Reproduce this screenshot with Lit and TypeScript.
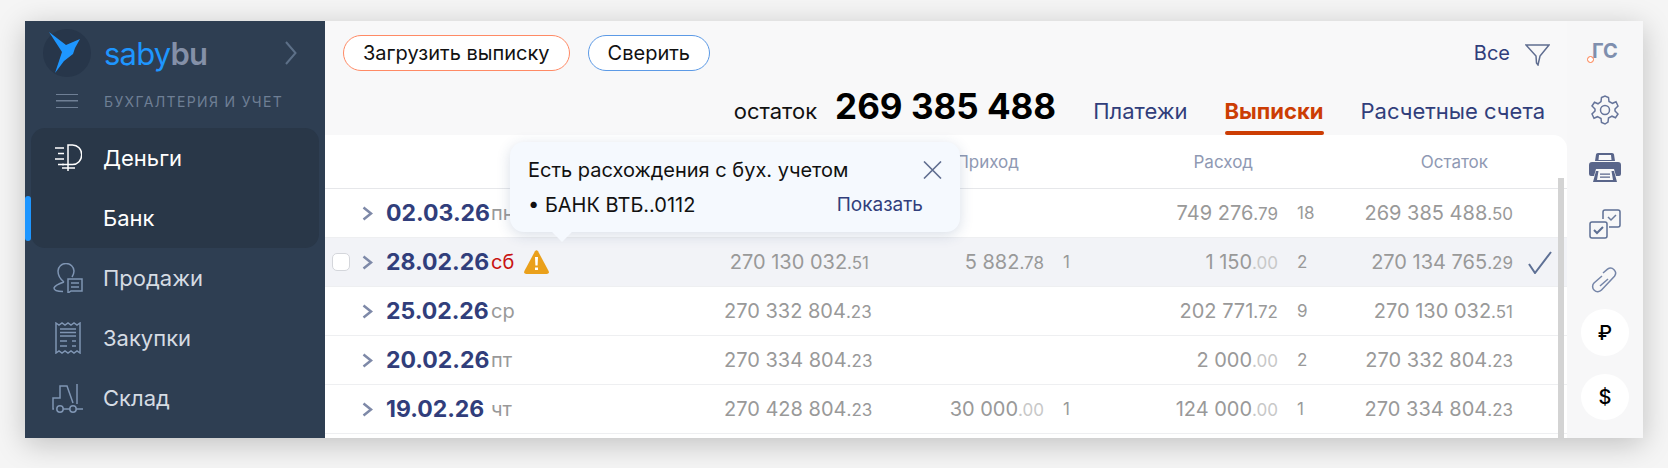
import { LitElement, css, html, svg } from 'lit'
import { customElement } from 'lit/decorators.js'

interface Money {
  whole: string
  cents: string
  count?: string
}

interface Row {
  date: string
  day: string
  balance?: Money
  income?: Money
  expense: Money
  rest: Money
  active?: boolean
}

const rows: Row[] = [
  {
    date: '02.03.26',
    day: 'пн',
    expense: { whole: '749 276', cents: '79', count: '18' },
    rest: { whole: '269 385 488', cents: '50' },
  },
  {
    date: '28.02.26',
    day: 'сб',
    active: true,
    balance: { whole: '270 130 032', cents: '51' },
    income: { whole: '5 882', cents: '78', count: '1' },
    expense: { whole: '1 150', cents: '00', count: '2' },
    rest: { whole: '270 134 765', cents: '29' },
  },
  {
    date: '25.02.26',
    day: 'ср',
    balance: { whole: '270 332 804', cents: '23' },
    expense: { whole: '202 771', cents: '72', count: '9' },
    rest: { whole: '270 130 032', cents: '51' },
  },
  {
    date: '20.02.26',
    day: 'пт',
    balance: { whole: '270 334 804', cents: '23' },
    expense: { whole: '2 000', cents: '00', count: '2' },
    rest: { whole: '270 332 804', cents: '23' },
  },
  {
    date: '19.02.26',
    day: 'чт',
    balance: { whole: '270 428 804', cents: '23' },
    income: { whole: '30 000', cents: '00', count: '1' },
    expense: { whole: '124 000', cents: '00', count: '1' },
    rest: { whole: '270 334 804', cents: '23' },
  },
]

const icon = (w: number, h: number, body: unknown) => html`
  <svg width=${w} height=${h} viewBox="0 0 ${w} ${h}" fill="none" stroke="currentColor" stroke-width="1.5">
    ${body}
  </svg>
`

const icons = {
  logo: icon(
    36,
    42,
    svg`<path stroke="none" fill="#1e96ff" d="M0 0 L17 13 L31 7 L26 16 L24 22 L15 29 L6 41 L13 20 Z" />`,
  ),
  chevron: icon(
    12,
    24,
    svg`<path stroke-width="2" d="M1 1 L10.5 12 L1 23" />`,
  ),
  money: icon(
    28,
    28,
    svg`<path d="M1 4h9M4 9.5h6M1 15h9M4 20.5h6" />
        <path d="M14 27V1h4.5a8.5 9 0 0 1 0 19.5H8M8 24h13" />`,
  ),
  sales: icon(
    30,
    30,
    svg`<path d="M11 19c-4-3-6-6-6-11a8 7.5 0 0 1 16 0c0 2-.8 4-2 6" />
        <path d="M11 19c-3 1-9 3-10 6 0 2 3 3.5 9 3.5" />
        <path d="M15 16h14v12H18l-3 2zM18 20h8M18 24h8" />`,
  ),
  purchases: icon(
    26,
    32,
    svg`<path d="M1 1l3 2 3-2 3 2 3-2 3 2 3-2 3 2 3-2v30l-3-2-3 2-3-2-3 2-3-2-3 2-3-2-3 2z" />
        <path d="M5 7h16M5 10.500h16M5 14h16M5 19h7M17 19h4M5 24h7M17 24h4" />`,
  ),
  stock: icon(
    32,
    30,
    svg`<path d="M2 26H1V15h7V3h7l6 17" />
        <path d="M25 1v20" />
        <circle cx="8" cy="26" r="3.200" />
        <circle cx="21" cy="26" r="3.200" />
        <path d="M11 26h7M24 26h7" />`,
  ),
  filter: icon(
    25,
    22,
    svg`<path d="M1 1h23l-9 11-2 9-1.500-2-.5-7z" />`,
  ),
  gear: icon(
    28,
    30,
    svg`<path d="M10.500 2.500 14 1l3.500 1.500.5 4 3.500 1.800 3.500-1.500L27 11l-3 3 0 2 3 3-2.500 3.700-3.500-1.500-3.500 1.800-.5 4L14 29l-3.500-1.500-.5-4-3.500-1.800-3.500 1.500L1 19l3-3 0-2-3-3 2.500-3.700 3.500 1.500L10 6.500z" />
        <circle cx="14" cy="15" r="4.500" />`,
  ),
  printer: html`
    <svg width="32" height="29" viewBox="0 0 32 29">
      <path fill="#59658a" d="M7 1.500Q7 0 9 0h14q2 0 2 1.500L26 8H6zM3 9h26q3 0 3 3v9q0 2-2 2h-3l-2-7H7l-2 7H2q-2 0-2-2v-9q0-3 3-3zM7 18h18l3 11H4z" />
      <path fill="#f8f8f9" d="M9.500 18h13l1.500 9H8zM10 2h12l.5 5h-13z" />
      <path fill="#59658a" d="M11 20.500h10v1.300H11zM11 23.500h10v1.300H11z" />
    </svg>
  `,
  checks: icon(
    32,
    30,
    svg`<path d="M14 10V3q0-2 2-2h13q2 0 2 2v13q0 2-2 2h-9" stroke="#5d6f94" />
        <path d="M19 8l3 3 5-5" stroke="#6c7c9c" />
        <rect x="1" y="13" width="17" height="16" rx="2" stroke="#5d6f94" />
        <path d="M5 21l3 3 6-6" stroke="#5d6f94" stroke-width="2" />`,
  ),
  link: icon(
    28,
    28,
    svg`<path d="M12 6l4.500-3.800a5 5 0 0 1 7 7L10.500 23a5 5 0 0 1-7.500-7L11 9" stroke="#7585a8" />
        <path d="M9 19l8-7" stroke="#7585a8" />`,
  ),
  warning: html`
    <svg width="25" height="24" viewBox="0 0 25 24">
      <path fill="#eaa01b" d="M11 1.200q1.500-2 3 0L24.600 21q1 3-2 3H2.400q-3 0-2-3z" />
      <path fill="#fff" d="M11 7h3l-.4 8.500h-2.200zM11 17.500h3V20h-3z" />
    </svg>
  `,
  close: icon(
    19,
    18,
    svg`<path d="M1 .500l17 17M18 .500l-17 17" stroke="#5f6d90" stroke-width="1.600" />`,
  ),
  rowCheck: icon(
    24,
    23,
    svg`<path d="M1 13l6 9L23 1" stroke="#5e7095" stroke-width="2" />`,
  ),
}

@customElement('app-root')
export class AppRoot extends LitElement {
  static styles = css`
    :host {
      display: block;
      height: 468px;
      padding: 21px 25px 0;
      box-sizing: border-box;
      background: #f5f5f5;
      font-family: Inter, 'Liberation Sans', sans-serif;
      overflow: hidden;
    }
    .frame {
      display: flex;
      width: 1618px;
      height: 417px;
      background: #f8f8f9;
      box-shadow: 0 6px 28px rgba(0, 0, 0, 0.22);
    }

    /* левая панель */
    .side {
      flex: 0 0 300px;
      background: #2e3e52;
      overflow: hidden;
    }
    .brand {
      display: flex;
      align-items: center;
      height: 48px;
      margin-top: 8px;
      padding: 0 28px 0 18px;
    }
    .logo {
      display: flex;
      align-items: center;
      justify-content: center;
      width: 48px;
      height: 48px;
      margin-right: 13px;
      border-radius: 50%;
      background: #27364a;
    }
    .brand-name {
      flex: 1;
      font-size: 31px;
      letter-spacing: -0.8px;
      color: #1e96ff;
    }
    .brand-name span {
      color: #8490a8;
      font-weight: 600;
    }
    .brand svg {
      color: #5d7088;
    }
    .section {
      display: flex;
      align-items: center;
      height: 30px;
      margin-top: 9px;
      padding-left: 31px;
      color: #6f7f95;
    }
    .burger {
      width: 22px;
      height: 14px;
      margin-right: 26px;
      border-top: 1.5px solid #6f7f95;
      border-bottom: 1.5px solid #6f7f95;
      background: linear-gradient(#6f7f95, #6f7f95) center / 100% 1.5px no-repeat;
      box-sizing: border-box;
    }
    .section-title {
      font-size: 14px;
      letter-spacing: 1.35px;
    }
    .current {
      position: relative;
      margin: 12px 6px 0;
      height: 120px;
      border-radius: 14px;
      background: #293748;
    }
    .current::before {
      content: '';
      position: absolute;
      left: -6px;
      top: 68px;
      width: 6px;
      height: 45px;
      border-radius: 3px;
      background: #1e96ff;
    }
    .nav-item {
      display: flex;
      align-items: center;
      height: 60px;
      padding-left: 26px;
      font-size: 22px;
      color: #d5dbe3;
    }
    .current .nav-item {
      padding-left: 20px;
      color: #fff;
    }
    .nav-icon {
      display: flex;
      align-items: center;
      justify-content: center;
      width: 36px;
      margin-right: 17px;
      margin-left: -1px;
      color: #7f95b3;
    }
    .current .nav-icon {
      color: #fff;
    }

    /* центральная часть */
    .main {
      position: relative;
      flex: 1;
      display: flex;
      flex-direction: column;
      min-width: 0;
    }
    .top {
      flex: 0 0 114px;
      display: flex;
      flex-direction: column;
    }
    .toolbar {
      display: flex;
      align-items: center;
      gap: 18px;
      padding: 14px 0 0 18px;
    }
    .btn {
      display: flex;
      align-items: center;
      height: 36px;
      padding: 0 19px;
      box-sizing: border-box;
      border: 1px solid #ff8a65;
      border-radius: 18px;
      background: #fff;
      font-size: 20px;
      color: #111;
    }
    .btn.blue {
      border-color: #5c9ae6;
    }
    .filter {
      margin-left: auto;
      display: flex;
      align-items: center;
      gap: 15px;
      padding-right: 17px;
      font-size: 20px;
      color: #313e7b;
    }
    .filter svg {
      color: #5f6d90;
      margin-top: 3px;
    }
    .summary {
      display: flex;
      align-items: baseline;
      margin-top: auto;
      padding-right: 22px;
      justify-content: flex-end;
    }
    .rest-label {
      font-size: 22px;
      color: #111;
      margin-right: 18px;
    }
    .rest-total {
      font-size: 35px;
      font-weight: 700;
      color: #000;
      margin-right: 37px;
    }
    .tab {
      position: relative;
      height: 47px;
      margin-left: 37px;
      font-size: 22px;
      line-height: 47px;
      color: #313e7b;
    }
    .rest-total + .tab {
      margin-left: 0;
    }
    .tab.on {
      font-weight: 700;
      color: #cc3d04;
    }
    .tab.on::after {
      content: '';
      position: absolute;
      left: 0;
      right: 0;
      bottom: 0;
      height: 4px;
      border-radius: 2px;
      background: #cc3d04;
    }

    .card {
      position: relative;
      flex: 1;
      min-height: 0;
      overflow: hidden;
      border-top-right-radius: 14px;
      background: #fff;
    }
    .cols {
      display: grid;
      grid-template-columns: 399px 145px 175px 56px 178px 64px 171px 1fr;
      align-items: center;
    }
    .head {
      height: 54px;
      box-sizing: border-box;
      border-bottom: 1px solid #e6e7ea;
      font-size: 17px;
      color: #8f99b3;
    }
    .head span {
      text-align: right;
    }
    .head .income {
      grid-column: 3;
      padding-right: 25px;
    }
    .head .expense {
      grid-column: 5;
      padding-right: 25px;
    }
    .head .rest {
      grid-column: 7;
      padding-right: 25px;
    }
    .row {
      height: 49px;
      box-sizing: border-box;
      border-bottom: 1px solid #eeeff1;
      font-size: 20px;
      color: #999;
    }
    .row.active {
      background: #f2f3f7;
    }
    .lead {
      display: flex;
      align-items: center;
    }
    .tick {
      flex: 0 0 18px;
      height: 18px;
      margin: 0 12px 0 7px;
      box-sizing: border-box;
      border: 1px solid #d4d6db;
      border-radius: 5px;
      background: #fff;
    }
    .tick.off {
      visibility: hidden;
    }
    .arrow {
      flex: 0 0 11px;
      height: 15px;
      margin-right: 13px;
      color: #7e89a8;
    }
    .date {
      width: 105px;
      font-size: 23px;
      font-weight: 700;
      color: #313e7b;
    }
    .day {
      font-size: 20px;
    }
    .row.active .day {
      color: #c81212;
    }
    .warn {
      display: flex;
      margin-left: 10px;
    }
    .sum {
      text-align: right;
      white-space: nowrap;
    }
    .sum small {
      font-size: 17px;
    }
    .sum small.zero {
      color: #c8c8c8;
    }
    .count {
      padding-left: 19px;
      font-size: 17px;
    }
    .done {
      display: flex;
      justify-content: flex-end;
      padding-right: 15px;
    }
    .scroll {
      position: absolute;
      right: 3px;
      top: 43px;
      bottom: 0;
      width: 6px;
      background: #d3d3d3;
    }

    /* подсказка */
    .tip {
      position: absolute;
      left: 185px;
      top: 121px;
      width: 450px;
      height: 90px;
      padding: 0 18px;
      box-sizing: border-box;
      border-radius: 14px;
      background: #f5f9fe;
      box-shadow: 0 3px 14px rgba(40, 70, 120, 0.18);
      display: flex;
      flex-direction: column;
      justify-content: center;
      gap: 11px;
      font-size: 20px;
      color: #111;
    }
    .tip::after {
      content: '';
      position: absolute;
      left: 45px;
      bottom: -7px;
      width: 14px;
      height: 14px;
      background: #f5f9fe;
      transform: rotate(45deg);
    }
    .tip-line {
      display: flex;
      align-items: center;
      justify-content: space-between;
    }
    .tip-show {
      padding-right: 19px;
      font-size: 19px;
      color: #313e7b;
    }

    /* правая колонка */
    .rail {
      flex: 0 0 76px;
      display: flex;
      flex-direction: column;
      align-items: center;
      background: #f7f7f8;
    }
    .rail-item {
      display: flex;
      align-items: center;
      justify-content: center;
      height: 59px;
      color: #66749a;
    }
    .user {
      position: relative;
      height: 63px;
      font-size: 20px;
      font-weight: 700;
      color: #7f8fae;
    }
    .user::before {
      content: '';
      position: absolute;
      left: -5px;
      top: 35px;
      width: 5px;
      height: 5px;
      border: 1px solid #ff7a45;
      border-radius: 50%;
      background: #fff;
    }
    .coin {
      display: flex;
      align-items: center;
      justify-content: center;
      width: 48px;
      height: 48px;
      margin-bottom: 18px;
      border-radius: 50%;
      background: #fff;
      font-size: 20px;
      font-weight: 500;
      color: #000;
    }
  `

  private sum(value?: Money) {
    if (!value) return html`<span class="sum"></span>`
    return html`<span class="sum"
      >${value.whole}<small class=${value.cents === '00' ? 'zero' : ''}>.${value.cents}</small></span
    >`
  }

  private renderRow(row: Row) {
    return html`
      <div class="cols row ${row.active ? 'active' : ''}">
        <div class="lead">
          <span class="tick ${row.active ? '' : 'off'}"></span>
          <svg class="arrow" viewBox="0 0 11 15" fill="none" stroke="currentColor" stroke-width="2.500">
            <path d="M1.500 1.500 L9 7.500 L1.500 13.500" />
          </svg>
          <span class="date">${row.date}</span>
          <span class="day">${row.day}</span>
          ${row.active ? html`<span class="warn">${icons.warning}</span>` : null}
        </div>
        ${this.sum(row.balance)} ${this.sum(row.income)}
        <span class="count">${row.income?.count}</span>
        ${this.sum(row.expense)}
        <span class="count">${row.expense.count}</span>
        ${this.sum(row.rest)}
        <span class="done">${row.active ? icons.rowCheck : null}</span>
      </div>
    `
  }

  render() {
    return html`
      <div class="frame">
        <aside class="side">
          <div class="brand">
            <div class="logo">${icons.logo}</div>
            <div class="brand-name">saby<span>bu</span></div>
            ${icons.chevron}
          </div>
          <div class="section">
            <div class="burger"></div>
            <div class="section-title">БУХГАЛТЕРИЯ И УЧЕТ</div>
          </div>
          <div class="current">
            <div class="nav-item"><span class="nav-icon">${icons.money}</span>Деньги</div>
            <div class="nav-item"><span class="nav-icon"></span>Банк</div>
          </div>
          <div class="nav-item"><span class="nav-icon">${icons.sales}</span>Продажи</div>
          <div class="nav-item"><span class="nav-icon">${icons.purchases}</span>Закупки</div>
          <div class="nav-item"><span class="nav-icon">${icons.stock}</span>Склад</div>
        </aside>

        <main class="main">
          <div class="top">
            <div class="toolbar">
              <div class="btn">Загрузить выписку</div>
              <div class="btn blue">Сверить</div>
              <div class="filter">Все ${icons.filter}</div>
            </div>
            <div class="summary">
              <span class="rest-label">остаток</span>
              <span class="rest-total">269 385 488</span>
              <span class="tab">Платежи</span>
              <span class="tab on">Выписки</span>
              <span class="tab">Расчетные счета</span>
            </div>
          </div>
          <div class="card">
            <div class="cols head">
              <span class="income">Приход</span>
              <span class="expense">Расход</span>
              <span class="rest">Остаток</span>
            </div>
            ${rows.map((row) => this.renderRow(row))}
            <div class="scroll"></div>
          </div>
          <div class="tip">
            <div class="tip-line">Есть расхождения с бух. учетом ${icons.close}</div>
            <div class="tip-line">• БАНК ВТБ..0112 <span class="tip-show">Показать</span></div>
          </div>
        </main>

        <nav class="rail">
          <div class="rail-item user">ГС</div>
          <div class="rail-item">${icons.gear}</div>
          <div class="rail-item">${icons.printer}</div>
          <div class="rail-item">${icons.checks}</div>
          <div class="rail-item">${icons.link}</div>
          <div class="coin">₽</div>
          <div class="coin">$</div>
        </nav>
      </div>
    `
  }
}

declare global {
  interface HTMLElementTagNameMap {
    'app-root': AppRoot
  }
}
